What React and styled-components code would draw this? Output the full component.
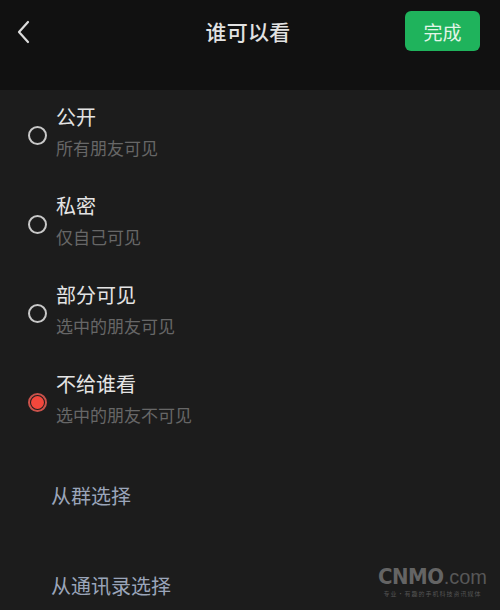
import React from 'react'
import styled, {createGlobalStyle} from 'styled-components'

const GlobalStyle = createGlobalStyle`
  html, body {
    margin: 0;
    padding: 0;
    background: #1c1c1c;
  }
  body {
    font-family: "Noto Sans CJK SC", "Noto Sans", sans-serif;
  }
`

const Screen = styled.div`
  position: relative;
  width: 500px;
  height: 610px;
  overflow: hidden;
  background: #1c1c1c;
`

const Header = styled.header`
  height: 90px;
  box-sizing: border-box;
  padding: 11px 20px 0 16px;
  background: #111111;
`

const TopRow = styled.div`
  display: grid;
  grid-template-columns: 1fr auto 1fr;
  align-items: center;
  height: 40px;
`

const BackButton = styled.button`
  justify-self: start;
  display: flex;
  align-items: center;
  background: none;
  border: 0;
  padding: 0;
  margin-top: 1px;
  cursor: pointer;
`

const Title = styled.h1`
  margin: 0;
  font-size: 21px;
  font-weight: 500;
  color: #e2e2e2;
  letter-spacing: 0.3px;
`

const DoneButton = styled.button`
  justify-self: end;
  width: 75px;
  height: 40px;
  border: 0;
  border-radius: 6px;
  background: #1fb35c;
  color: #e3f5e8;
  font-family: inherit;
  font-size: 19px;
  cursor: pointer;
`

const Options = styled.div`
  display: flex;
  flex-direction: column;
`

const Option = styled.div`
  display: flex;
  align-items: center;
  gap: 9px;
  height: 89px;
  box-sizing: border-box;
  padding: 14px 0 0 28px;
  align-items: flex-start;
`

const Radio = styled.span`
  flex: none;
  width: 19px;
  height: 19px;
  margin-top: 22px;
  box-sizing: border-box;
  border-radius: 50%;
  border: 2px solid ${props => props.checked ? '#c9524b' : '#c8c8c8'};
  display: flex;
  align-items: center;
  justify-content: center;

  &::after {
    content: '';
    display: ${props => props.checked ? 'block' : 'none'};
    width: 13px;
    height: 13px;
    border-radius: 50%;
    background: #f2473c;
  }
`

const OptionText = styled.div`
  display: flex;
  flex-direction: column;
  gap: 6px;
`

const OptionTitle = styled.div`
  font-size: 20px;
  line-height: 26px;
  color: #e4e4e4;
`

const OptionSub = styled.div`
  font-size: 17px;
  line-height: 24px;
  color: #676767;
`

const Links = styled.div`
  margin-top: 4px;
  display: flex;
  flex-direction: column;
`

const PickLink = styled.div`
  height: 90px;
  display: flex;
  align-items: center;
  padding-left: 51px;
  font-size: 20px;
  color: #9aa5ba;
`

const Watermark = styled.div`
  position: absolute;
  right: 13px;
  bottom: 12px;
  display: flex;
  flex-direction: column;
  align-items: center;
  color: #6c6c6c;
  opacity: 0.9;
`

const Brand = styled.div`
  font-family: "Liberation Sans", sans-serif;
  line-height: 22px;
  white-space: nowrap;

  b {
    font-family: "DejaVu Sans Condensed", "Liberation Sans", sans-serif;
    font-size: 22px;
    font-weight: 700;
    letter-spacing: -0.5px;
  }

  span {
    font-size: 20px;
    color: #5e5e5e;
  }
`

const Slogan = styled.div`
  font-size: 6px;
  line-height: 8px;
  letter-spacing: 1px;
  color: #5a5a5a;
`

const options = [
    {title: '公开', sub: '所有朋友可见'},
    {title: '私密', sub: '仅自己可见'},
    {title: '部分可见', sub: '选中的朋友可见'},
    {title: '不给谁看', sub: '选中的朋友不可见', checked: true},
]

export default function App() {
    return (
        <Screen>
            <GlobalStyle/>
            <Header>
                <TopRow>
                    <BackButton aria-label="返回">
                        <svg width="16" height="24" viewBox="0 0 16 24">
                            <path d="M12 2 L3 12 L12 22" fill="none" stroke="#dcdcdc" strokeWidth="2.2"
                                  strokeLinecap="round" strokeLinejoin="round"/>
                        </svg>
                    </BackButton>
                    <Title>谁可以看</Title>
                    <DoneButton>完成</DoneButton>
                </TopRow>
            </Header>

            <Options>
                {options.map(o => (
                    <Option key={o.title}>
                        <Radio checked={o.checked}/>
                        <OptionText>
                            <OptionTitle>{o.title}</OptionTitle>
                            <OptionSub>{o.sub}</OptionSub>
                        </OptionText>
                    </Option>
                ))}
            </Options>

            <Links>
                <PickLink>从群选择</PickLink>
                <PickLink>从通讯录选择</PickLink>
            </Links>

            <Watermark>
                <Brand><b>CNMO</b><span>.com</span></Brand>
                <Slogan>专业·有趣的手机科技资讯媒体</Slogan>
            </Watermark>
        </Screen>
    )
}
